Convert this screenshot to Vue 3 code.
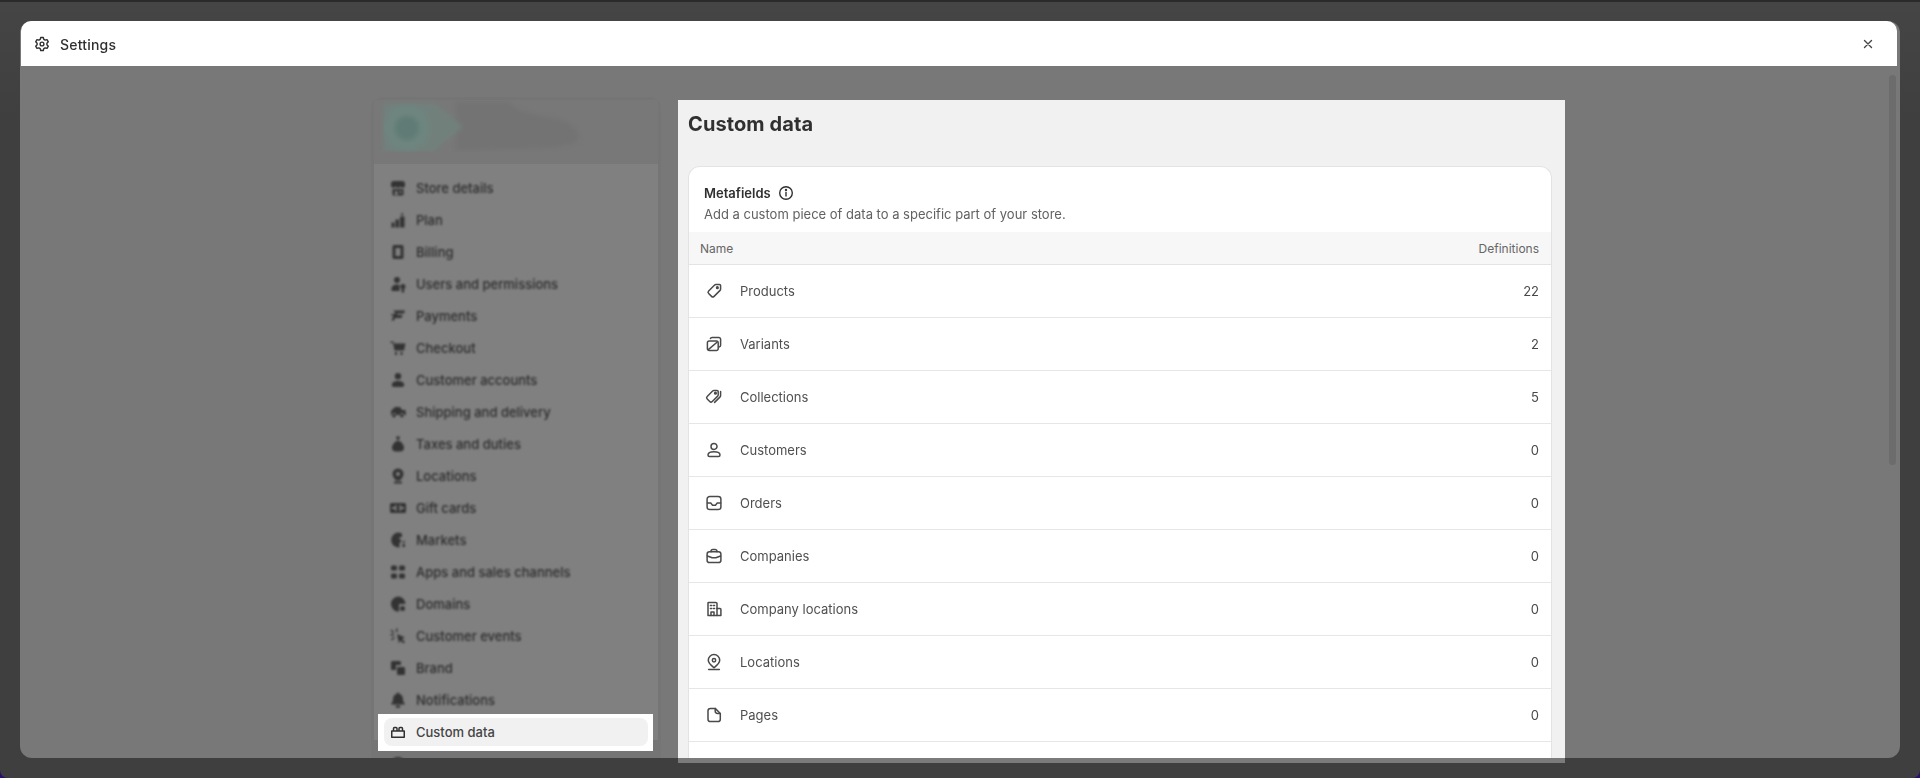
<script setup>
const navTop = [
  { label: 'Store details', d: 'M6 3h8a3 3 0 0 1 3 3v1.500a2.200 2.200 0 0 1-2 2.200 2.400 2.400 0 0 1-2.500-1.200A2.800 2.800 0 0 1 10 9.800a2.800 2.800 0 0 1-2.500-1.300A2.400 2.400 0 0 1 5 9.700a2.200 2.200 0 0 1-2-2.200V6a3 3 0 0 1 3-3zM4.500 11h11v5.500a1 1 0 0 1-1 1h-9a1 1 0 0 1-1-1V11zM7 13v4h2.500v-4H7zm4.500 0v2h2v-2h-2z' },
  { label: 'Plan', d: 'M13.500 3h1.500v2.500h-1.500zM12 6.500h4.500v11H12zM7.500 9.500H11v8H7.500zM3.500 12.500H6.500v5h-3z' },
  { label: 'Billing', d: 'M6 3h8a1.500 1.500 0 0 1 1.500 1.500v11A1.500 1.500 0 0 1 14 17H6a1.500 1.500 0 0 1-1.500-1.500v-11A1.500 1.500 0 0 1 6 3zm1.500 3v8h5V6h-5z' },
  { label: 'Users and permissions', d: 'M9 3a3 3 0 1 1 0 6 3 3 0 0 1 0-6zM3.500 15c0-3 2.500-4.500 5.500-4.500 1 0 1.900.2 2.600.5V17H5a1.500 1.500 0 0 1-1.500-2zM15 10a2.500 2.500 0 0 1 1.200 4.700V18l-1.500 1-1-1v-3.300A2.500 2.500 0 0 1 15 10z' },
  { label: 'Payments', d: 'M6 4.500h11l-1 3H9.500l-.5 1.500h5.500l-1 3H7l-1 2.500H3.500l2-5H3l.5-1.500h3L7.500 6H5.500z' },
  { label: 'Checkout', d: 'M2.500 3.500h3l.5 2h11.500l-1.500 7H6.500L5 5H2.500zM7 14h2v3H7zm5.500 0h2v3h-2z' },
  { label: 'Customer accounts', d: 'M10 3a3.200 3.200 0 1 1 0 6.400A3.200 3.200 0 0 1 10 3zM3.800 15c0-2.500 2.700-4 6.200-4s6.200 1.500 6.200 4a2 2 0 0 1-2 2H5.800a2 2 0 0 1-2-2z' },
  { label: 'Shipping and delivery', d: 'M3 9l4-4h5l2 3h3.500l.5 5h-2a2 2 0 0 0-4 0H8a2 2 0 0 0-4 0H3zM6 12a1.800 1.800 0 1 1 0 3.600A1.800 1.800 0 0 1 6 12zm7.800 0a1.800 1.800 0 1 1 0 3.600 1.800 1.800 0 0 1 0-3.600z' },
  { label: 'Taxes and duties', d: 'M8 2.500h4l-1 3.500H9zM8.500 7h3c2.500 1.500 4.500 4 4.500 6.500a4 4 0 0 1-4 4H8a4 4 0 0 1-4-4C4 11 6 8.500 8.500 7z' },
  { label: 'Locations', d: 'M10 2.500a5.500 5.500 0 0 1 5.500 5.500c0 2.500-2 4.500-3.500 6.500H8C6.500 12.500 4.500 10.500 4.500 8A5.500 5.500 0 0 1 10 2.500zm0 3.500a2 2 0 1 0 0 4 2 2 0 0 0 0-4zM6 15.500h8V17.500H6z' },
  { label: 'Gift cards', d: 'M3.500 5h13A1.500 1.500 0 0 1 18 6.500v7a1.500 1.500 0 0 1-1.500 1.500h-13A1.500 1.500 0 0 1 2 13.500v-7A1.500 1.500 0 0 1 3.500 5zM7 7v2H4v2h3v2h1.500V7zm4.500 0v6h1.500v-2h3V9h-3V7z' },
  { label: 'Markets', d: 'M10 2.500a7.500 7.500 0 0 1 4 1.200V7h-2.500v2.500H13v3h-1.500v5A7.500 7.500 0 1 1 10 2.500zM14.500 11h2.500v1.500h-2.500zm0 3h2.500v3h-2.500z' },
  { label: 'Apps and sales channels', d: 'M4.500 3.500h3a1.500 1.500 0 0 1 1.500 1.500v2a1.500 1.500 0 0 1-1.500 1.500h-3A1.500 1.500 0 0 1 3 7V5a1.500 1.500 0 0 1 1.500-1.500zm8 0h3A1.500 1.500 0 0 1 17 5v2a1.500 1.500 0 0 1-1.500 1.500h-3A1.500 1.500 0 0 1 11 7V5a1.500 1.500 0 0 1 1.500-1.500zm-8 8h3A1.500 1.500 0 0 1 9 13v2a1.500 1.500 0 0 1-1.500 1.500h-3A1.500 1.500 0 0 1 3 15v-2a1.500 1.500 0 0 1 1.500-1.500zm8 0h3A1.500 1.500 0 0 1 17 13v2a1.500 1.500 0 0 1-1.500 1.500h-3A1.500 1.500 0 0 1 11 15v-2a1.500 1.500 0 0 1 1.500-1.500z' },
  { label: 'Domains', d: 'M10 2.500a7.500 7.500 0 0 1 7.500 7.500H11v7.500a7.500 7.500 0 1 1-1-15zM14.500 12a2.500 2.500 0 1 1 0 5 2.500 2.500 0 0 1 0-5z' },
  { label: 'Customer events', d: 'M9 8l8 3.500-3 1.500 3 3-1.500 1.500-3-3-1.500 3zM8 2.500h1.500v3.500H8zM2.500 8H6v1.500H2.500zM3.500 3.500l2.800 2.800-1 1-2.800-2.800zM3 13.500l2.800-2.800 1 1L4 14.500z' },
  { label: 'Brand', d: 'M4.500 3h7A1.500 1.500 0 0 1 13 4.500V7H8v5H4.500A1.500 1.500 0 0 1 3 10.500v-6A1.500 1.500 0 0 1 4.500 3zM10 9h5.500A1.500 1.500 0 0 1 17 10.500v5a1.500 1.500 0 0 1-1.500 1.500h-5A1.500 1.500 0 0 1 9 15.500V10a1 1 0 0 1 1-1z' },
  { label: 'Notifications', d: 'M10 2.500a1.500 1.500 0 0 1 1.500 1.500c2.500.7 3.500 3 3.500 5.500 0 2 1.500 3.500 2 5H3c.5-1.500 2-3 2-5C5 7 6 4.700 8.500 4A1.500 1.500 0 0 1 10 2.500zM7.500 15.500h5a2.500 2.500 0 0 1-5 0z' }
]

const rows = [
  { label: 'Products', count: 22, paths: ['M11.600 4.500h2.900a1 1 0 0 1 1 1v2.900a1.500 1.500 0 0 1-.44 1.060l-5 5a1.500 1.500 0 0 1-2.120 0l-2.400-2.400a1.500 1.500 0 0 1 0-2.120l5-5a1.500 1.500 0 0 1 1.060-.44z'], dot: [12.800, 7.200] },
  { label: 'Variants', count: 2, paths: ['M6 7.500h6a1.500 1.500 0 0 1 1.500 1.500v5A1.500 1.500 0 0 1 12 15.500H6A1.500 1.500 0 0 1 4.500 14V9A1.500 1.500 0 0 1 6 7.500z', 'M7 5.500c.2-.6.700-1 1.400-1h5.600a1.500 1.500 0 0 1 1.500 1.500v5c0 .7-.4 1.200-1 1.400', 'M5.500 14.500l7-6'] },
  { label: 'Collections', count: 5, paths: ['M10.100 4.500h2.400a1 1 0 0 1 1 1v2.700a1.500 1.500 0 0 1-.44 1.060l-4.500 4.500a1.500 1.500 0 0 1-2.120 0l-2.100-2.100a1.500 1.500 0 0 1 0-2.120l4.500-4.500a1.500 1.500 0 0 1 1.260-.54z', 'M15.500 5.500v3.200a2 2 0 0 1-.6 1.400l-4.400 4.400'], dot: [11.200, 6.800] },
  { label: 'Customers', count: 0, paths: ['M10 4.500a2.500 2.500 0 1 1 0 5 2.500 2.500 0 0 1 0-5z', 'M5 14.200c0-1.700 2.200-2.700 5-2.700s5 1 5 2.700c0 .7-.5 1.300-1.200 1.300H6.200c-.7 0-1.200-.6-1.200-1.300z'] },
  { label: 'Orders', count: 0, paths: ['M6.500 4.500h7a2.250 2.250 0 0 1 2.250 2.250v6.500a2.250 2.250 0 0 1-2.250 2.250h-7a2.250 2.250 0 0 1-2.250-2.250v-6.500A2.250 2.250 0 0 1 6.500 4.500z', 'M4.500 10h2.800l1.500 1.800h2.400l1.500-1.800h2.800'] },
  { label: 'Companies', count: 0, paths: ['M6.250 6.500h7.500a2 2 0 0 1 2 2v5a2 2 0 0 1-2 2h-7.500a2 2 0 0 1-2-2v-5a2 2 0 0 1 2-2z', 'M7.500 6.500V6a1.500 1.500 0 0 1 1.500-1.500h2A1.500 1.500 0 0 1 12.500 6v.5', 'M4.500 10l4 1.500h3l4-1.500'] },
  { label: 'Company locations', count: 0, paths: ['M5.500 4.500h6a1 1 0 0 1 1 1v10h-7.500V5a.5.500 0 0 1 .5-.5z', 'M12.500 9.500h2.500a.75.750 0 0 1 .75.750v5.250H12.500', 'M7 7h1M9.500 7h1M7 9.500h1M9.500 9.500h1M7.500 15.500v-3h2.500v3'] },
  { label: 'Locations', count: 0, paths: ['M10 3.750a4.750 4.750 0 0 1 4.750 4.750c0 2.500-2.500 4.400-4.750 6.250C7.750 12.900 5.250 11 5.250 8.500A4.750 4.750 0 0 1 10 3.750z', 'M5.500 16.250h9'], dot: [10, 8.500], dotR: 1.400 },
  { label: 'Pages', count: 0, paths: ['M7 4.500h4l4.250 4.250V13.500a2 2 0 0 1-2 2H7a2 2 0 0 1-2-2V6.500a2 2 0 0 1 2-2z', 'M11 4.500v2.250a2 2 0 0 0 2 2h2.250'] }
]
</script>

<template>
  <div class="shell">
    <div class="modal">
      <header class="modal-head">
        <div class="head-title">
          <svg class="gear" viewBox="0 0 20 20" width="20" height="20" fill="none" stroke="#303030" stroke-width="1.400" stroke-linejoin="round">
            <path d="M8.700 3.500h2.600l.5 1.900 1.300.75 1.900-.55 1.300 2.250-1.400 1.400v1.500l1.400 1.400-1.300 2.250-1.900-.55-1.300.75-.5 1.900H8.700l-.5-1.900-1.300-.75-1.900.55-1.300-2.250 1.400-1.400v-1.500l-1.400-1.400 1.300-2.250 1.900.55 1.300-.75z" />
            <circle cx="10" cy="10" r="1.900" />
          </svg>
          <span class="head-text">Settings</span>
        </div>
        <svg class="close" viewBox="0 0 12 12" width="12" height="12" fill="none" stroke="#444" stroke-width="1.400" stroke-linecap="round">
          <path d="M2.500 2.500l7 7M9.500 2.500l-7 7" />
        </svg>
      </header>

      <div class="modal-body">
        <aside class="side">
          <div class="logo-area">
            <svg class="logo" viewBox="0 0 210 54" width="210" height="54">
              <defs>
                <filter id="soft" x="-10%" y="-20%" width="120%" height="140%" color-interpolation-filters="sRGB"><feGaussianBlur stdDeviation="2" /></filter>
              </defs>
              <g filter="url(#soft)">
                <path d="M78 4h52c8 8 20 12 35 14 22 3 35 10 36 22-5 8-20 9-40 10l-83 2z" fill="#737373" />
                <path d="M6 5h50l27 21q2 3 0 5L55 54H8a3 3 0 0 1-3-3V8z" fill="#72807c" />
                <circle cx="29" cy="30" r="23" fill="#6e857f" />
                <circle cx="29" cy="30" r="12" fill="#607b75" />
              </g>
            </svg>
          </div>
          <div class="nav">
            <div class="nav-blur">
              <div v-for="item in navTop" :key="item.label" class="nav-row">
                <svg viewBox="0 0 20 20" width="20" height="20" fill="#333"><path :d="item.d" fill-rule="evenodd" /></svg>
                <span>{{ item.label }}</span>
              </div>
            </div>
            <div class="nav-active">
              <div class="pill">
                <svg viewBox="0 0 20 20" width="20" height="20" fill="none" stroke="#303030" stroke-width="1.500" stroke-linejoin="round">
                  <path d="M3.750 9h12.500v6.250H3.750zM5.500 8.750V6.500a1 1 0 0 1 1-1H8a1 1 0 0 1 1 1v2.250M11 8.750V6.500a1 1 0 0 1 1-1h1.500a1 1 0 0 1 1 1v2.250" />
                </svg>
                <span>Custom data</span>
              </div>
            </div>
            <div class="nav-blur">
              <div class="nav-row">
                <svg viewBox="0 0 20 20" width="20" height="20" fill="#333"><circle cx="10" cy="10" r="7" /></svg>
              </div>
            </div>
          </div>
        </aside>

        <main class="panel">
          <h1 class="title">Custom data</h1>
          <section class="card">
            <div class="card-head">
              <div class="card-title">
                <span>Metafields</span>
                <svg viewBox="0 0 20 20" width="20" height="20" fill="none" stroke="#303030" stroke-width="1.400" stroke-linecap="round">
                  <circle cx="10" cy="10" r="6.300" />
                  <path d="M10 9.500v3.500" />
                  <circle cx="10" cy="7" r=".5" fill="#303030" />
                </svg>
              </div>
              <p class="card-desc">Add a custom piece of data to a specific part of your store.</p>
            </div>
            <div class="table-head">
              <span>Name</span>
              <span>Definitions</span>
            </div>
            <div v-for="row in rows" :key="row.label" class="row">
              <svg viewBox="0 0 20 20" width="24" height="24" fill="none" stroke="#4a4a4a" stroke-width="1.250" stroke-linecap="round" stroke-linejoin="round">
                <path v-for="(p, i) in row.paths" :key="i" :d="p" />
                <circle v-if="row.dot" :cx="row.dot[0]" :cy="row.dot[1]" :r="row.dotR || 0.7" />
              </svg>
              <span class="row-label">{{ row.label }}</span>
              <span class="row-count">{{ row.count }}</span>
            </div>
            <div class="row"></div>
          </section>
        </main>

        <div class="scroll-thumb"></div>
      </div>
    </div>
  </div>
</template>

<style>
html, body { margin: 0; background: #2a0f6e; overflow: hidden; }
</style>

<style scoped>
.shell {
  box-sizing: border-box;
  width: 1920px;
  height: 778px;
  padding: 19px 20px 20px;
  border-top: 2px solid #2a2a2a;
  border-radius: 0 0 8px 8px;
  background: linear-gradient(#454545, #3f3f3f 120px);
  font-family: Inter, "Liberation Sans", sans-serif;
  font-size: 13px;
  color: #303030;
  overflow: hidden;
}
.modal {
  display: flex;
  flex-direction: column;
  height: 737px;
  border-radius: 12px;
  background: #787878;
}
.modal-head {
  display: flex;
  align-items: center;
  justify-content: space-between;
  height: 45px;
  margin: 0 3px 0 1px;
  padding: 0 23px 0 11px;
  background: #fff;
  border-radius: 10px 10px 0 0;
}
.head-title {
  display: flex;
  align-items: center;
  gap: 8px;
  font-size: 14px;
  font-weight: 550;
  letter-spacing: 0.2px;
  color: #303030;
  filter: blur(0.3px);
}
.head-text { padding-top: 1px; }
.close { filter: blur(0.3px); }
.modal-body {
  position: relative;
  display: flex;
  align-items: flex-start;
  flex: 1;
  gap: 17px;
  padding: 31px 0 0 351px;
  min-height: 0;
}
.side {
  box-sizing: border-box;
  width: 290px;
  height: 661px;
  flex: none;
  padding: 3px 3px 0;
  overflow: hidden;
  border-radius: 12px 12px 0 0;
  background: #757575;
}
.logo-area { height: 64px; background: #787878; position: relative; }
.logo { display: block; position: absolute; left: 4px; top: -2px; }
.nav {
  height: 576px;
  padding-top: 8px;
  box-sizing: border-box;
  background: #808080;
}
.nav-blur { filter: blur(1px); }
.nav-row {
  display: flex;
  align-items: center;
  gap: 8px;
  height: 32px;
  padding-left: 14px;
  color: #2c2c2c;
  font-weight: 500;
}
.nav-active {
  box-sizing: border-box;
  height: 37px;
  margin: -2px 5px -3px 4px;
  padding: 4px 5px 5px 6px;
  background: #fff;
  position: relative;
}
.pill {
  display: flex;
  align-items: center;
  gap: 8px;
  height: 28px;
  padding-left: 4px;
  border-radius: 8px;
  background: #f1f1f1;
  color: #444;
  font-weight: 450;
}
.panel {
  box-sizing: border-box;
  width: 887px;
  height: 663px;
  margin-top: 3px;
  flex: none;
  padding: 12px 13px 0 10px;
  overflow: hidden;
  background: #f1f1f1;
  border-bottom: 5px solid #7b7b7b;
}
.title {
  margin: 0 0 30px;
  font-size: 20px;
  line-height: 24px;
  font-weight: 700;
  letter-spacing: 0.1px;
  color: #303030;
  filter: blur(0.25px);
}
.card {
  background: #fff;
  border: 1px solid #e3e3e3;
  border-bottom: 0;
  border-radius: 12px 12px 0 0;
}
.card-head { padding: 16px 16px 8px 15px; filter: blur(0.25px); }
.card-title {
  display: flex;
  align-items: center;
  gap: 2px;
  height: 20px;
  font-weight: 600;
  color: #303030;
}
.card-title svg { margin-left: 3px; }
.card-desc {
  margin: 1px 0 0;
  line-height: 20px;
  color: #616161;
}
.table-head {
  box-sizing: border-box;
  display: flex;
  justify-content: space-between;
  align-items: center;
  height: 33px;
  padding: 0 12px 0 11px;
  background: #f7f7f7;
  border-bottom: 1px solid #e3e3e3;
  font-size: 12px;
  color: #666;
}
.row {
  box-sizing: border-box;
  display: flex;
  align-items: center;
  gap: 14px;
  height: 53px;
  padding: 0 12px 0 13px;
  border-bottom: 1px solid #e6e6e6;
  color: #4f4f4f;
}
.row-label { flex: 1; filter: blur(0.25px); }
.row-count { color: #484848; filter: blur(0.25px); }
.scroll-thumb {
  position: absolute;
  right: 4px;
  top: 9px;
  width: 7px;
  height: 390px;
  border-radius: 4px;
  background: #6c6c6c;
}
</style>
